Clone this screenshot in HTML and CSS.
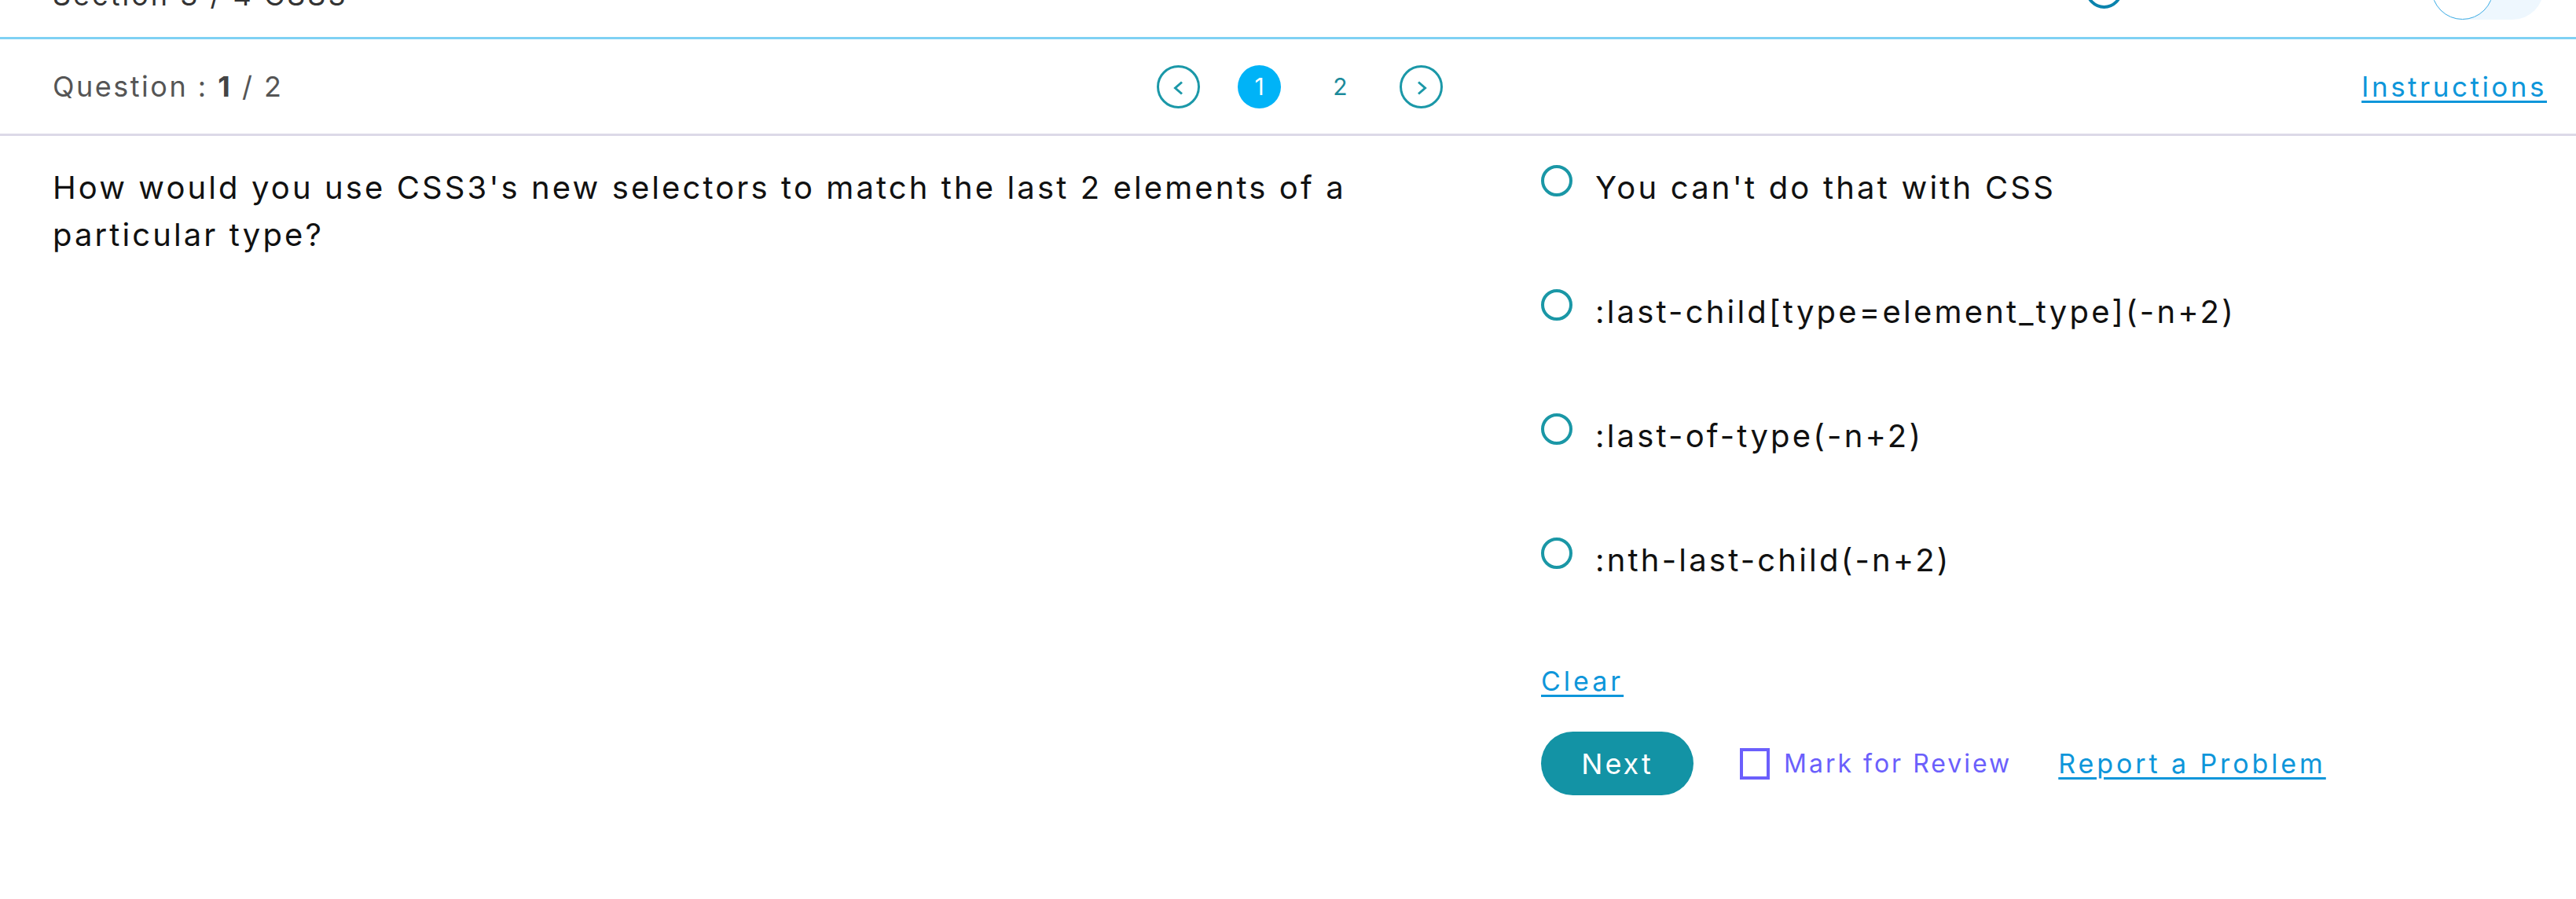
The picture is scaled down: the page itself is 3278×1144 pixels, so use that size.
FILE: index.html
```html
<!DOCTYPE html>
<html lang="en">
<head>
<meta charset="utf-8">
<title>Assessment</title>
<link rel="stylesheet" href="styles.css">
</head>
<body>
<div class="page">
  <header class="topbar">
    <div class="section-title">Section 3 / 4 CSS3</div>
    <div class="topbar-right">
      <span class="timer-ring"></span>
      <span class="toggle"><span class="toggle-knob"></span></span>
    </div>
  </header>

  <div class="qbar">
    <div class="qcount">Question : <b>1</b> / 2</div>
    <nav class="pager">
      <span class="pg-arrow"><svg viewBox="0 0 16 18" width="16" height="18"><polyline points="12,1.5 3.5,9 12,16.5" fill="none" stroke="#1b98a8" stroke-width="3"/></svg></span>
      <span class="pg-num active">1</span>
      <span class="pg-num">2</span>
      <span class="pg-arrow"><svg viewBox="0 0 16 18" width="16" height="18"><polyline points="4,1.5 12.5,9 4,16.5" fill="none" stroke="#1b98a8" stroke-width="3"/></svg></span>
    </nav>
    <a class="instructions" href="#">Instructions</a>
  </div>

  <main class="content">
    <section class="question">
      <p class="question-text">How would you use CSS3's new selectors to match the last 2 elements of a particular type?</p>
    </section>
    <section class="answers">
      <ul class="options">
        <li class="option"><span class="radio"></span><span class="option-text">You can't do that with CSS</span></li>
        <li class="option"><span class="radio"></span><span class="option-text">:last-child[type=element_type](-n+2)</span></li>
        <li class="option"><span class="radio"></span><span class="option-text">:last-of-type(-n+2)</span></li>
        <li class="option"><span class="radio"></span><span class="option-text">:nth-last-child(-n+2)</span></li>
      </ul>
      <a class="clear" href="#">Clear</a>
      <div class="actions">
        <button class="next" type="button">Next</button>
        <label class="review"><span class="checkbox"></span>Mark for Review</label>
        <a class="report" href="#">Report a Problem</a>
      </div>
    </section>
  </main>
</div>
</body>
</html>
```

FILE: styles.css
```css
html, body {
  margin: 0;
  padding: 0;
  background: #fff;
}

body {
  font-family: Inter, "Open Sans", Arial, sans-serif;
  color: #111;
}

.page {
  width: 100%;
}

/* top bar (scrolled partly out of view) */
.topbar {
  height: 47px;
  overflow: hidden;
  border-bottom: 3px solid #7fd1f4;
  display: flex;
  justify-content: space-between;
  align-items: flex-start;
  padding: 0 41px 0 67px;
}

.section-title {
  font-size: 36px;
  line-height: 36px;
  margin-top: -24px;
  color: #333;
  letter-spacing: 3px;
}

.topbar-right {
  display: flex;
  align-items: flex-start;
  gap: 393px;
}

.timer-ring {
  width: 39px;
  height: 39px;
  border: 4px solid #0a83ad;
  border-radius: 50%;
  margin-top: -36px;
}

.toggle {
  width: 143px;
  height: 80px;
  border-radius: 40px;
  background: #eef7fe;
  margin-top: -55px;
  display: flex;
  align-items: center;
}

.toggle-knob {
  width: 79px;
  height: 79px;
  border: 1.5px solid #3aabe4;
  border-radius: 50%;
  background: #fff;
  box-sizing: border-box;
}

/* question bar */
.qbar {
  height: 120px;
  border-bottom: 3px solid #dcd9e8;
  display: grid;
  grid-template-columns: 1fr auto 1fr;
  align-items: center;
  padding: 0 37px 0 67px;
}

.qcount {
  font-size: 36px;
  color: #555;
  letter-spacing: 2.5px;
}

.qcount b {
  color: #444;
  font-weight: 700;
}

.pager {
  display: flex;
  align-items: center;
  gap: 48px;
}

.pg-arrow {
  width: 55px;
  height: 55px;
  box-sizing: border-box;
  border: 3px solid #1b98a8;
  border-radius: 50%;
  display: flex;
  align-items: center;
  justify-content: center;
}

.pg-arrow svg {
  margin-top: 4px;
}

.pg-num {
  width: 55px;
  height: 55px;
  border-radius: 50%;
  display: flex;
  align-items: center;
  justify-content: center;
  font-size: 30px;
  color: #1b8a9b;
}

.pg-num.active {
  background: #00b3f7;
  color: #fff;
}

.instructions {
  justify-self: end;
  font-size: 35px;
  color: #0e96da;
  letter-spacing: 3.5px;
  text-decoration-thickness: 3px;
  text-underline-offset: 5px;
}

/* content */
.content {
  display: flex;
  padding: 36px 37px 0 67px;
}

.question {
  width: 1800px;
  flex: none;
}

.question-text {
  margin: 0;
  font-size: 40px;
  line-height: 60px;
  letter-spacing: 3.1px;
  color: #111;
}

.answers {
  margin-left: 94px;
  flex: 1;
}

.options {
  list-style: none;
  margin: 0;
  padding: 0;
  display: flex;
  flex-direction: column;
  gap: 98px;
}

.option {
  display: flex;
  align-items: flex-start;
  gap: 29px;
}

.radio {
  flex: none;
  width: 40px;
  height: 40px;
  box-sizing: border-box;
  border: 4px solid #1a97a6;
  border-radius: 50%;
  margin-top: 1px;
}

.option-text {
  font-size: 40px;
  line-height: 60px;
  letter-spacing: 3.2px;
  color: #111;
}

.clear {
  display: inline-block;
  margin-top: 100px;
  font-size: 34px;
  line-height: 48px;
  color: #0e96da;
  letter-spacing: 4px;
  text-decoration-thickness: 3px;
  text-underline-offset: 5px;
}

.actions {
  display: flex;
  align-items: center;
  margin-top: 40px;
}

.next {
  width: 194px;
  height: 81px;
  border: 0;
  border-radius: 41px;
  background: #1393a5;
  color: #fff;
  font-family: inherit;
  font-size: 36px;
  letter-spacing: 3px;
}

.review {
  display: flex;
  align-items: center;
  gap: 18px;
  margin-left: 59px;
  font-size: 32px;
  color: #6b5ffc;
  letter-spacing: 3px;
}

.checkbox {
  width: 38px;
  height: 40px;
  box-sizing: border-box;
  border: 4px solid #6b5ffc;
}

.report {
  margin-left: 59px;
  font-size: 34px;
  color: #0e96da;
  letter-spacing: 3.9px;
  text-decoration-thickness: 3px;
  text-underline-offset: 5px;
}
```
